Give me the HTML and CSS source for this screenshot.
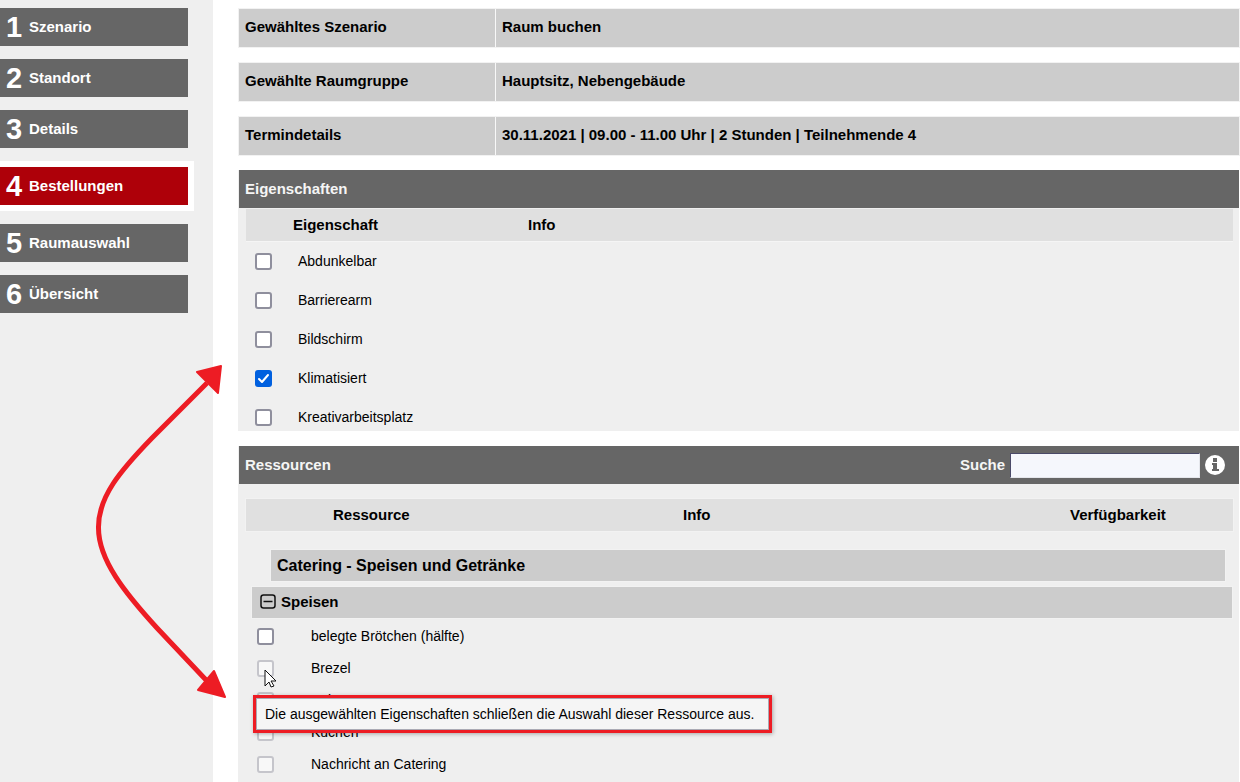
FILE: index.html
```html
<!DOCTYPE html>
<html lang="de">
<head>
	<meta charset="UTF-8">
	<meta name="viewport" content="width=device-width, initial-scale=1">
	<title>Raum buchen - Bestellungen</title>
	<link rel="stylesheet" href="styles.css">
</head>
<body>
	<nav class="steps">
		<ol>
			<li><a href="#"><span class="num">1</span>Szenario</a></li>
			<li><a href="#"><span class="num">2</span>Standort</a></li>
			<li><a href="#"><span class="num">3</span>Details</a></li>
			<li class="cur"><a href="#"><span class="num">4</span>Bestellungen</a></li>
			<li><a href="#"><span class="num">5</span>Raumauswahl</a></li>
			<li><a href="#"><span class="num">6</span>Übersicht</a></li>
		</ol>
	</nav>
	<main class="content">
		<dl class="summary">
			<div class="summary_row"><dt>Gewähltes Szenario</dt><dd>Raum buchen</dd></div>
			<div class="summary_row"><dt>Gewählte Raumgruppe</dt><dd>Hauptsitz, Nebengebäude</dd></div>
			<div class="summary_row"><dt>Termindetails</dt><dd><strong>30.11.2021</strong> | 09.00 - 11.00 Uhr | 2 Stunden | Teilnehmende 4</dd></div>
		</dl>

		<section class="panel features">
			<h2 class="panel_head">Eigenschaften</h2>
			<div class="features_list">
				<table>
					<thead>
						<tr><th class="col_check"></th><th class="col_name">Eigenschaft</th><th>Info</th></tr>
					</thead>
					<tbody>
						<tr><td><input type="checkbox" id="f1"></td><td><label for="f1">Abdunkelbar</label></td><td></td></tr>
						<tr><td><input type="checkbox" id="f2"></td><td><label for="f2">Barrierearm</label></td><td></td></tr>
						<tr><td><input type="checkbox" id="f3"></td><td><label for="f3">Bildschirm</label></td><td></td></tr>
						<tr><td><input type="checkbox" id="f4" checked></td><td><label for="f4">Klimatisiert</label></td><td></td></tr>
						<tr><td><input type="checkbox" id="f5"></td><td><label for="f5">Kreativarbeitsplatz</label></td><td></td></tr>
					</tbody>
				</table>
			</div>
		</section>

		<section class="panel resources">
			<div class="panel_head">
				<h2>Ressourcen</h2>
				<div class="search">
					<label for="search">Suche</label>
					<input type="text" id="search">
					<button type="button" class="info" aria-label="Hilfe">
						<svg width="20" height="20" viewBox="0 0 20 20">
							<circle cx="10" cy="10" r="10" fill="#fff"/>
							<path d="M8 3h4v4H8zM7 8h5v6h2v2H7v-2h1v-4H7z" fill="#666"/>
						</svg>
					</button>
				</div>
			</div>
			<div class="res_cols"><span>Ressource</span><span>Info</span><span>Verfügbarkeit</span></div>
			<h3 class="category">Catering - Speisen und Getränke</h3>
			<button type="button" class="group">
				<svg width="16" height="16" viewBox="0 0 16 16" fill="none" stroke="#111">
					<rect x="1" y="1" width="14" height="13" rx="2.500" stroke-width="1.500"/>
					<path d="M3.500 7.500h9" stroke-width="1.500"/>
				</svg>
				Speisen
			</button>
			<ul class="items">
				<li><input type="checkbox" id="r1"><label for="r1">belegte Brötchen (hälfte)</label></li>
				<li class="hover">
					<input type="checkbox" id="r2" disabled><label for="r2">Brezel</label>
					<svg class="cursor" width="13" height="20" viewBox="0 0 13 20">
						<path d="M1 1v16l4-4 2 5 3-1-3-5h5z" fill="#fff" stroke="#111"/>
					</svg>
					<div class="tip" role="tooltip">Die ausgewählten Eigenschaften schließen die Auswahl dieser Ressource aus.</div>
				</li>
				<li><input type="checkbox" id="r3" disabled><label for="r3">Kekse</label></li>
				<li><input type="checkbox" id="r4" disabled><label for="r4">Kuchen</label></li>
				<li><input type="checkbox" id="r5" disabled><label for="r5">Nachricht an Catering</label></li>
			</ul>
		</section>
	</main>

	<!-- links the features to the blocked resource -->
	<svg class="arrow" width="140" height="345" viewBox="90 360 140 345">
		<path d="M207 383L152 438C120 471 98 497 98.500 528C98.500 560 125 593 157 628L207 681" fill="none" stroke="#ed1c24" stroke-width="5"/>
		<path d="M197 372L221 366L218 393ZM214 671L225 697L198 690Z" fill="#ed1c24" stroke="#ed1c24" stroke-width="2" stroke-linejoin="round"/>
	</svg>
</body>
</html>
```
FILE: styles.css
```css
*{margin:0;padding:0;box-sizing: border-box;list-style: none;}
body{display: flex;min-height: 100vh;position: relative;background: #fff;color: #000;font: 14px/16px "Liberation Sans", Arial, sans-serif;}
h2, h3, th, dt, dd, button, .search{font: bold 15px/18px "Liberation Sans", Arial, sans-serif;}
button{border: 0;background: none;cursor: pointer;}

.steps{width: 213px;flex: none;background: #efefef;padding-top: 8px;}
.steps ol{display: flex;flex-direction: column;gap: 13px;align-items: flex-start;}
.steps a{display: flex;align-items: center;width: 188px;height: 38px;padding-left: 6px;background: #666;color: #fff;font-weight: bold;font-size: 15px;text-decoration: none;}
.steps .num{width: 23px;font: bold 29px/38px "Liberation Sans", Arial, sans-serif;}
.steps .cur{border: 6px solid #fff;border-left: 0;}
.steps .cur a{background: #ae0009;}

.content{flex: 1;min-width: 0;padding: 9px 1px 0 25px;display: flex;flex-direction: column;}
.summary{display: flex;flex-direction: column;gap: 16px;}
.summary_row{display: flex;height: 38px;background: #ccc;outline: 1px solid #f2f2f2;margin-left: 1px;}
.summary dt, .summary dd{padding: 9px 6px;}
.summary dt{width: 257px;flex: none;border-right: 1px solid #f8f8f8;}

.panel{background: #efefef;margin-top: 15px;padding-left: 1px;}
.panel_head{display: flex;align-items: center;justify-content: space-between;height: 38px;padding: 0 14px 0 6px;background: #666;color: #f5f5f5;}

.features_list{max-height: 223px;overflow: hidden;padding: 1px 6px 0 7px;}
.features_list table{width: 100%;border-collapse: collapse;table-layout: fixed;}
.features_list th{height: 32px;background: #e0e0e0;text-align: left;border-bottom: 1px solid #f5f5f5;}
.features_list .col_check{width: 47px;}
.features_list .col_name{width: 235px;}
.features_list td{height: 39px;padding-left: 5px;vertical-align: middle;}
.features_list td:first-child{padding: 2px 0 0 9px;}

input[type=checkbox]{appearance: none;display: block;width: 17px;height: 17px;flex: none;border: 2px solid #8f8f9d;border-radius: 3px;background: #fff;}
input[type=checkbox]:checked{border: 0;background: #0060df url("data:image/svg+xml,%3Csvg xmlns='http://www.w3.org/2000/svg' viewBox='0 0 17 17'%3E%3Cpath d='M4 9l3 3 6-7' fill='none' stroke='white' stroke-width='2' stroke-linecap='round' stroke-linejoin='round'/%3E%3C/svg%3E");}
input[type=checkbox]:disabled{border-color: #c5c5cb;background: #f8f8f8;}

.search{display: flex;align-items: center;gap: 5px;}
.search input{width: 190px;height: 25px;background: #f5f7fc;border: 1px solid #e5e7ec;border-top-color: #4a4a68;border-left-color: #4a4a68;}
.info svg{display: block;}

.resources{flex: 1;padding-bottom: 1px;}
.res_cols{display: grid;grid-template-columns: 350px 387px 1fr;align-items: center;height: 32px;margin: 15px 6px 19px 7px;padding-left: 87px;background: #e0e0e0;outline: 1px solid #f2f2f2;font-weight: bold;font-size: 15px;}
.category{margin: 0 14px 6px 32px;padding: 7px 6px;height: 31px;background: #ccc;outline: 1px solid #f2f2f2;font-size: 16px;}
.group{display: flex;align-items: center;gap: 5px;width: calc(100% - 20px);height: 31px;margin-left: 13px;padding: 0 8px 2px;background: #ccc;outline: 1px solid #f2f2f2;color: #000;text-align: left;}
.items{padding: 2px 0 0 18px;}
.items li{display: flex;align-items: center;gap: 37px;height: 32px;}
.items .hover{position: relative;}
.cursor{position: absolute;left: 7px;top: 17px;z-index: 2;}
.tip{position: absolute;left: -4px;top: 43px;z-index: 1;padding: 8px 14px 8px 9px;border: 3px solid #ed1c24;background: #f5f5f5;box-shadow: inset 0 0 0 1px #aaaab4, 1px 1px 4px rgba(0,0,0,.3);white-space: nowrap;line-height: 16px;}

.arrow{position: absolute;left: 90px;top: 360px;pointer-events: none;}
```
